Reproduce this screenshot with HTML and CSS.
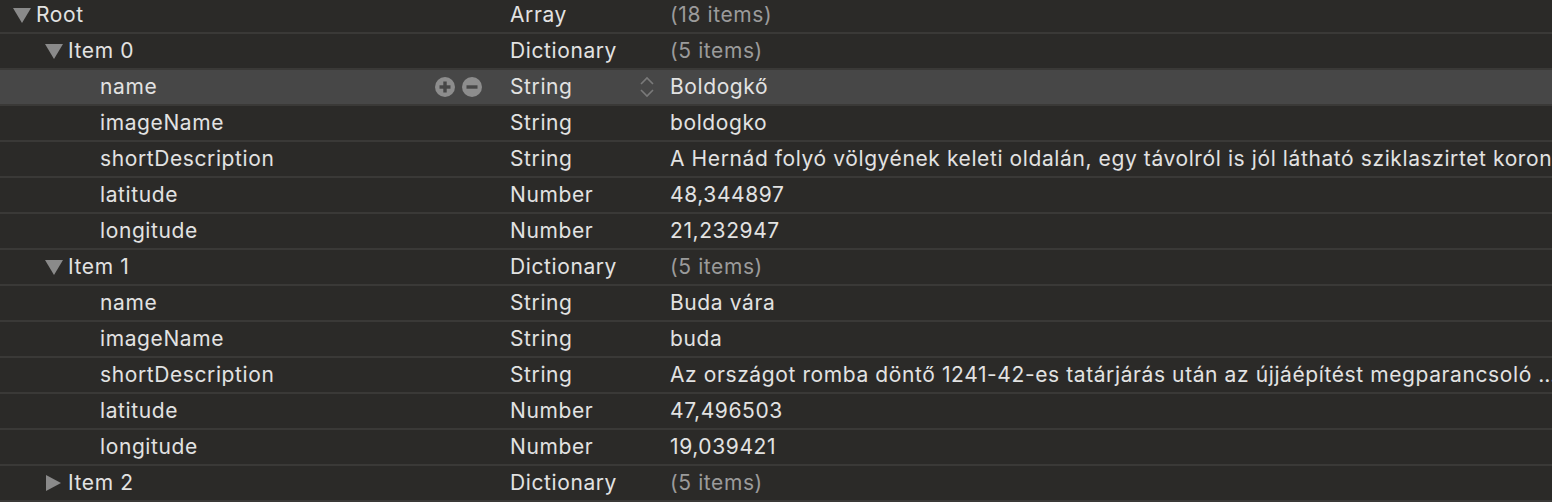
FILE: index.html
```html
<!DOCTYPE html>
<html lang="hu">
<head>
<meta charset="utf-8">
<title>Plist</title>
<link rel="stylesheet" href="styles.css">
</head>
<body>
<div class="outline">
  <div class="row">
    <div class="key lvl0"><span class="disc down"></span><span class="label">Root</span></div>
    <div class="type">Array</div>
    <div class="value dim">(18 items)</div>
  </div>
  <div class="row">
    <div class="key lvl1"><span class="disc down"></span><span class="label">Item 0</span></div>
    <div class="type">Dictionary</div>
    <div class="value dim">(5 items)</div>
  </div>
  <div class="row selected">
    <div class="key lvl2"><span class="label">name</span>
      <span class="btns">
        <span class="circ"><svg viewBox="0 0 20 20" width="20" height="20"><circle cx="10" cy="10" r="10" fill="#8d8d8d"/><rect x="4.5" y="8.3" width="11" height="3.4" fill="#474747"/><rect x="8.3" y="4.5" width="3.4" height="11" fill="#474747"/></svg></span>
        <span class="circ"><svg viewBox="0 0 20 20" width="20" height="20"><circle cx="10" cy="10" r="10" fill="#8d8d8d"/><rect x="4.5" y="8.3" width="11" height="3.4" fill="#474747"/></svg></span>
      </span>
    </div>
    <div class="type">String
      <span class="stepper"><svg viewBox="0 0 16 22" width="16" height="22"><path d="M2 8 L8 2 L14 8" fill="none" stroke="#7a7a7a" stroke-width="1.6"/><path d="M2 14 L8 20 L14 14" fill="none" stroke="#7a7a7a" stroke-width="1.6"/></svg></span>
    </div>
    <div class="value">Boldogkő</div>
  </div>
  <div class="row">
    <div class="key lvl2"><span class="label">imageName</span></div>
    <div class="type">String</div>
    <div class="value">boldogko</div>
  </div>
  <div class="row">
    <div class="key lvl2"><span class="label">shortDescription</span></div>
    <div class="type">String</div>
    <div class="value">A Hernád folyó völgyének keleti oldalán, egy távolról is jól látható sziklaszirtet koronázó vár …</div>
  </div>
  <div class="row">
    <div class="key lvl2"><span class="label">latitude</span></div>
    <div class="type">Number</div>
    <div class="value">48,344897</div>
  </div>
  <div class="row">
    <div class="key lvl2"><span class="label">longitude</span></div>
    <div class="type">Number</div>
    <div class="value">21,232947</div>
  </div>
  <div class="row">
    <div class="key lvl1"><span class="disc down"></span><span class="label">Item 1</span></div>
    <div class="type">Dictionary</div>
    <div class="value dim">(5 items)</div>
  </div>
  <div class="row">
    <div class="key lvl2"><span class="label">name</span></div>
    <div class="type">String</div>
    <div class="value">Buda vára</div>
  </div>
  <div class="row">
    <div class="key lvl2"><span class="label">imageName</span></div>
    <div class="type">String</div>
    <div class="value">buda</div>
  </div>
  <div class="row">
    <div class="key lvl2"><span class="label">shortDescription</span></div>
    <div class="type">String</div>
    <div class="value">Az országot romba döntő 1241-42-es tatárjárás után az újjáépítést megparancsoló …</div>
  </div>
  <div class="row">
    <div class="key lvl2"><span class="label">latitude</span></div>
    <div class="type">Number</div>
    <div class="value">47,496503</div>
  </div>
  <div class="row">
    <div class="key lvl2"><span class="label">longitude</span></div>
    <div class="type">Number</div>
    <div class="value">19,039421</div>
  </div>
  <div class="row">
    <div class="key lvl1"><span class="disc right"></span><span class="label">Item 2</span></div>
    <div class="type">Dictionary</div>
    <div class="value dim">(5 items)</div>
  </div>
</div>
</body>
</html>
```
FILE: styles.css
```css
html, body {
  margin: 0;
  padding: 0;
  background: #2b2a28;
  overflow: hidden;
}
body {
  font-family: Inter, "Noto Sans", "Liberation Sans", sans-serif;
  font-size: 21px;
  letter-spacing: 0.6px;
  color: #e2e2e2;
}
.outline {
  margin-top: -2px;
}
.row {
  display: flex;
  align-items: center;
  height: 33px;
  padding-bottom: 1px;
  border-bottom: 2px solid #3a3937;
  white-space: nowrap;
}
.row.selected {
  background: #474747;
}
.key {
  width: 510px;
  flex: none;
  display: flex;
  align-items: center;
  box-sizing: border-box;
}
.lvl0 { padding-left: 13px; }
.lvl1 { padding-left: 45px; }
.lvl2 { padding-left: 100px; }
.disc {
  width: 23px;
  height: 16px;
  flex: none;
  position: relative;
}
.disc.down::before {
  content: "";
  position: absolute;
  left: 0;
  top: 1px;
  border-left: 9px solid transparent;
  border-right: 9px solid transparent;
  border-top: 15px solid #8a8a8a;
}
.disc.right::before {
  content: "";
  position: absolute;
  left: 1px;
  top: 0;
  border-top: 8px solid transparent;
  border-bottom: 8px solid transparent;
  border-left: 15px solid #8a8a8a;
}
.btns {
  margin-left: auto;
  margin-right: 28px;
  display: flex;
  gap: 7px;
}
.circ {
  display: block;
  width: 20px;
  height: 20px;
}
.circ svg { display: block; }
.type {
  width: 160px;
  flex: none;
  display: flex;
  align-items: center;
}
.stepper {
  margin-left: auto;
  margin-right: 15px;
  display: block;
  height: 22px;
}
.stepper svg { display: block; }
.value {
  flex: 1;
  min-width: 0;
  overflow: hidden;
}
.dim {
  color: #9b9b9b;
}
```
